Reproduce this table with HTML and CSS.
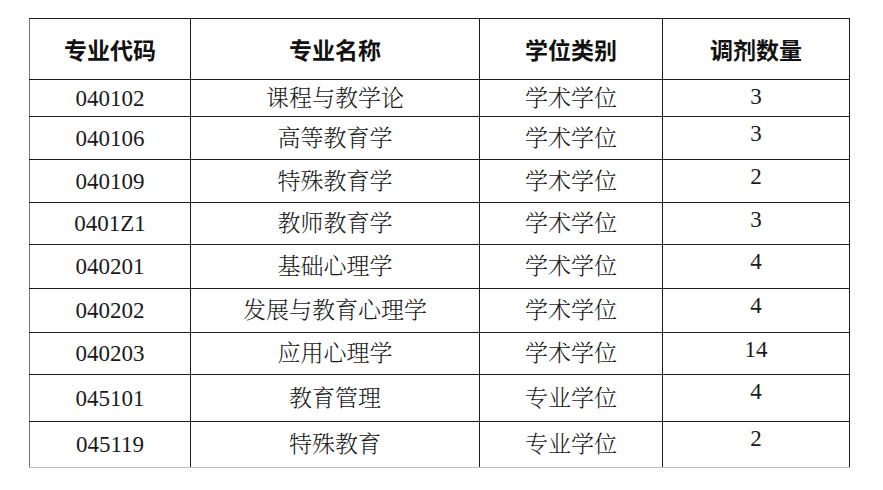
FILE: index.html
```html
<!DOCTYPE html>
<html lang="zh-CN">
<head>
<meta charset="utf-8">
<link rel="stylesheet" href="styles.css">
</head>
<body>
<table class="tbl">
  <colgroup>
    <col class="c1"><col class="c2"><col class="c3"><col class="c4">
  </colgroup>
  <thead>
    <tr class="head"><th>专业代码</th><th>专业名称</th><th>学位类别</th><th>调剂数量</th></tr>
  </thead>
  <tbody>
    <tr class="r37"><td>040102</td><td>课程与教学论</td><td>学术学位</td><td class="num">3</td></tr>
    <tr class="r43"><td>040106</td><td>高等教育学</td><td>学术学位</td><td class="num">3</td></tr>
    <tr class="r43"><td>040109</td><td>特殊教育学</td><td>学术学位</td><td class="num">2</td></tr>
    <tr class="r42"><td>0401Z1</td><td>教师教育学</td><td>学术学位</td><td class="num">3</td></tr>
    <tr class="r44"><td>040201</td><td>基础心理学</td><td>学术学位</td><td class="num">4</td></tr>
    <tr class="r44"><td>040202</td><td>发展与教育心理学</td><td>学术学位</td><td class="num">4</td></tr>
    <tr class="r42"><td>040203</td><td>应用心理学</td><td>学术学位</td><td class="num">14</td></tr>
    <tr class="r47"><td>045101</td><td>教育管理</td><td>专业学位</td><td class="num">4</td></tr>
    <tr class="r46 last"><td>045119</td><td>特殊教育</td><td>专业学位</td><td class="num">2</td></tr>
  </tbody>
</table>
</body>
</html>
```
FILE: styles.css
```css
html, body {
  margin: 0;
  padding: 0;
  background: #ffffff;
}
body {
  padding: 18px 0 0 29px;
}
.tbl {
  border-collapse: collapse;
  table-layout: fixed;
  width: 820px;
  color: #1a1a1a;
  font-family: "Liberation Serif", "Noto Serif CJK SC", "Noto Sans CJK SC", serif;
  font-size: 23px;
}
.c1 { width: 161px; }
.c2 { width: 289px; }
.c3 { width: 183px; }
.c4 { width: 187px; }
.tbl th, .tbl td {
  border: 1px solid #1c1c1c;
  text-align: center;
  padding: 0;
  line-height: 1;
}
.tbl th {
  font-family: "Noto Sans CJK SC", sans-serif;
  font-weight: 700;
  font-size: 23px;
  color: #111;
  height: 60px;
}
.tbl td {
  font-weight: 300;
}
.tbl tr > :first-child { border-left-color: #777; }
.r37 td { height: 36px; }
.r42 td { height: 41px; }
.r43 td { height: 42px; }
.r44 td { height: 43px; }
.r46 td { height: 45px; }
.r47 td { height: 46px; }
.tbl td.num {
  vertical-align: top;
  padding-top: 5px;
  height: auto;
}
.last td { border-bottom-color: #bdbdbd; }
```
